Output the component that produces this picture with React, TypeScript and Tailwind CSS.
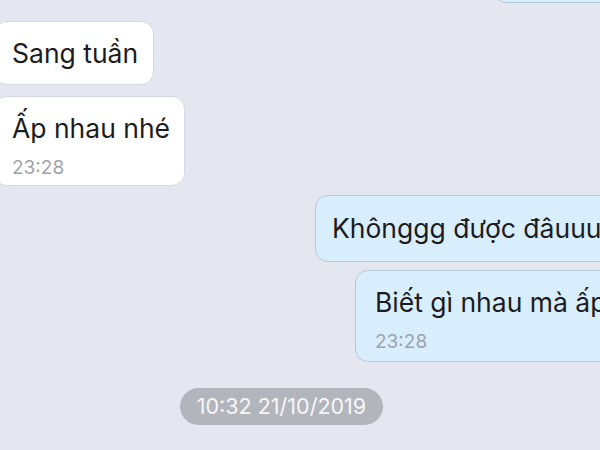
import { ReactNode } from "react";

const Incoming = ({ children, className }: { children: ReactNode; className?: string }) => (
  <div
    className={`self-start shrink-0 whitespace-nowrap -ml-[6px] bg-white border border-[#d6d9e1] rounded-[13px] pl-[17px] pr-[12px] ${className ?? ""}`}
  >
    {children}
  </div>
);

const Outgoing = ({ children, className }: { children: ReactNode; className?: string }) => (
  <div
    className={`self-start shrink-0 whitespace-nowrap bg-[#d9eefc] border border-[#b4c8da] rounded-[13px] pl-[16px] pr-[40px] ${className ?? ""}`}
  >
    {children}
  </div>
);

export default function App() {
  return (
    <div className="w-[600px] h-[450px] overflow-hidden bg-[#e4e7f0] flex flex-col font-['Inter','Noto_Sans',sans-serif] text-[#1c1c1e]">
      {/* tail of previous outgoing bubble */}
      <Outgoing className="ml-[493px] -mt-[60px] h-[63px] w-[140px]">
        <span />
      </Outgoing>

      <Incoming className="mt-[18px] h-[64px] w-[160px] flex items-center">
        <span className="text-[26.5px] leading-none">Sang tuần</span>
      </Incoming>

      <Incoming className="mt-[11px] h-[90px] w-[191px] flex flex-col pt-[16px]">
        <span className="text-[26.5px] leading-[30px]">Ấp nhau nhé</span>
        <span className="text-[19px] leading-none mt-[15px] text-[#a2a3a8]">23:28</span>
      </Incoming>

      <Outgoing className="ml-[315px] mt-[9px] h-[67px] flex items-center">
        <span className="text-[26.5px] leading-none">Khônggg được đâuuu</span>
      </Outgoing>

      <Outgoing className="ml-[355px] mt-[8px] h-[92px] flex flex-col pt-[16px] pl-[19px]">
        <span className="text-[26.5px] leading-[30px]">Biết gì nhau mà ấp</span>
        <span className="text-[19px] leading-none mt-[15px] text-[#9aa3ad]">23:28</span>
      </Outgoing>

      <div className="self-start shrink-0 ml-[180px] mt-[26px] w-[203px] h-[37px] rounded-full bg-[#b3b5bc] flex items-center justify-center">
        <span className="text-[21.5px] leading-none text-[#f7f7f9]">10:32 21/10/2019</span>
      </div>
    </div>
  );
}
